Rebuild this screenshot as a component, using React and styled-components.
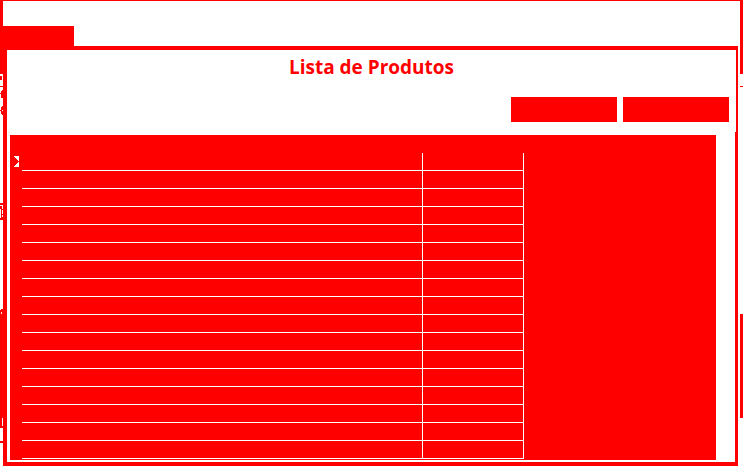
import React from "react";
import styled, { createGlobalStyle } from "styled-components";

const RED = "#ff0000";

const GlobalStyle = createGlobalStyle`
  *, *::before, *::after { box-sizing: border-box; }
  body {
    margin: 0;
    background: #fff;
    color: ${RED};
    font-family: "Open Sans", "Noto Sans", sans-serif;
  }
`;

const Window = styled.div`
  min-height: 100vh;
  background: #fff;
`;

const TopBar = styled.header`
  display: flex;
  align-items: flex-end;
  height: 46px;
  border-top: 1px solid ${RED};
  border-left: 3px solid ${RED};
  border-right: 3px solid ${RED};
`;

const TabButton = styled.button`
  width: 71px;
  height: 20px;
  padding: 0;
  border: 0;
  background: ${RED};
`;

const Workspace = styled.div`
  display: grid;
  grid-template-columns: 3px minmax(0, 1fr) 5px;
`;

const Edge = styled.svg`
  display: block;
  width: ${(p) => p.$width}px;
  height: 420px;
  fill: ${RED};
`;

const Dialog = styled.main`
  border: 4px solid ${RED};
  border-right-width: 2px;
`;

const DialogHeader = styled.div`
  height: 82px;
  padding: 3px 7px 0;
`;

const Title = styled.h1`
  margin: 0;
  font-size: 19px;
  line-height: 28px;
  font-weight: 700;
  text-align: center;
`;

const Actions = styled.div`
  display: flex;
  justify-content: flex-end;
  gap: 6px;
  padding-top: 16px;
`;

const ActionButton = styled.button`
  width: 106px;
  height: 25px;
  padding: 0;
  border: 0;
  background: ${RED};
`;

const DialogBody = styled.div`
  padding: 3px 19px 2px 3px;
  border-right: 1px solid ${RED};
`;

const GridPanel = styled.div`
  padding-bottom: 1px;
  background: ${RED};
  overflow: hidden;
`;

const Table = styled.table`
  border-collapse: separate;
  border-spacing: 0;
  table-layout: fixed;
  width: 514px;
`;

const Column = styled.col`
  width: ${(p) => p.$width}px;
`;

const HeadCell = styled.th`
  height: 18px;
  padding: 0;
`;

const MarkerCell = styled.td`
  height: 18px;
  padding: 3px 0 0 4px;
  vertical-align: top;
  line-height: 0;
`;

const Cell = styled.td`
  height: 18px;
  padding: 0;
  border-right: 1px solid #fff;
  border-bottom: 1px solid #fff;
`;

const Marker = styled.svg`
  display: block;
  width: 5px;
  height: 11px;
`;

const rows = Array.from({ length: 17 }, (_, i) => i);

function RowMarker() {
  return (
    <Marker viewBox="0 0 5 11" shapeRendering="crispEdges" aria-hidden="true">
      <path fill="#fff" d="M0 0H5V5H4V4H3V3H2V2H1V1H0ZM5 6V11H0V10H1V9H2V8H3V7H4V6Z" />
    </Marker>
  );
}

function LeftEdge() {
  return (
    <Edge $width={3} viewBox="0 0 3 420" shapeRendering="crispEdges" aria-hidden="true">
      <path d="M0 0H3V28H0ZM0 30H2V34H0ZM0 40H3V41H0Z" />
      <path d="M2 44H3V52H1V48H0V47H1V45H2Z" />
      <path fillRule="evenodd" d="M2 60H3V69H2V68H1V65H0V64H1V61H2ZM2 64V65H3V64Z" />
      <path d="M0 157H3V159H0ZM0 160H2V163H3V164H2V168H3V169H2V171H3V174H0V172H1V163H0Z" />
      <path fillRule="evenodd" d="M1 263H3V268H0V264H1ZM1 266H2V268H1Z" />
      <path d="M0 268H3V372H2V380H3V382H0ZM0 395H3V397H0Z" />
    </Edge>
  );
}

function RightEdge() {
  return (
    <Edge $width={5} viewBox="0 0 5 420" shapeRendering="crispEdges" aria-hidden="true">
      <path d="M2 0H5V28H2ZM2 40H5V41H2ZM2 268H5V372H2Z" />
    </Edge>
  );
}

export default function App() {
  return (
    <>
      <GlobalStyle />
      <Window>
        <TopBar>
          <TabButton type="button" aria-label="Produtos" />
        </TopBar>
        <Workspace>
          <LeftEdge />
          <Dialog>
            <DialogHeader>
              <Title>Lista de Produtos</Title>
              <Actions>
                <ActionButton type="button" aria-label="Incluir" />
                <ActionButton type="button" aria-label="Fechar" />
              </Actions>
            </DialogHeader>
            <DialogBody>
              <GridPanel>
                <Table aria-label="Lista de Produtos">
                  <colgroup>
                    <Column $width={12} />
                    <Column $width={401} />
                    <Column $width={101} />
                  </colgroup>
                  <thead>
                    <tr>
                      <HeadCell />
                      <HeadCell scope="col" />
                      <HeadCell scope="col" />
                    </tr>
                  </thead>
                  <tbody>
                    {rows.map((row) => (
                      <tr key={row}>
                        <MarkerCell>{row === 0 && <RowMarker />}</MarkerCell>
                        <Cell />
                        <Cell />
                      </tr>
                    ))}
                  </tbody>
                </Table>
              </GridPanel>
            </DialogBody>
          </Dialog>
          <RightEdge />
        </Workspace>
      </Window>
    </>
  );
}
